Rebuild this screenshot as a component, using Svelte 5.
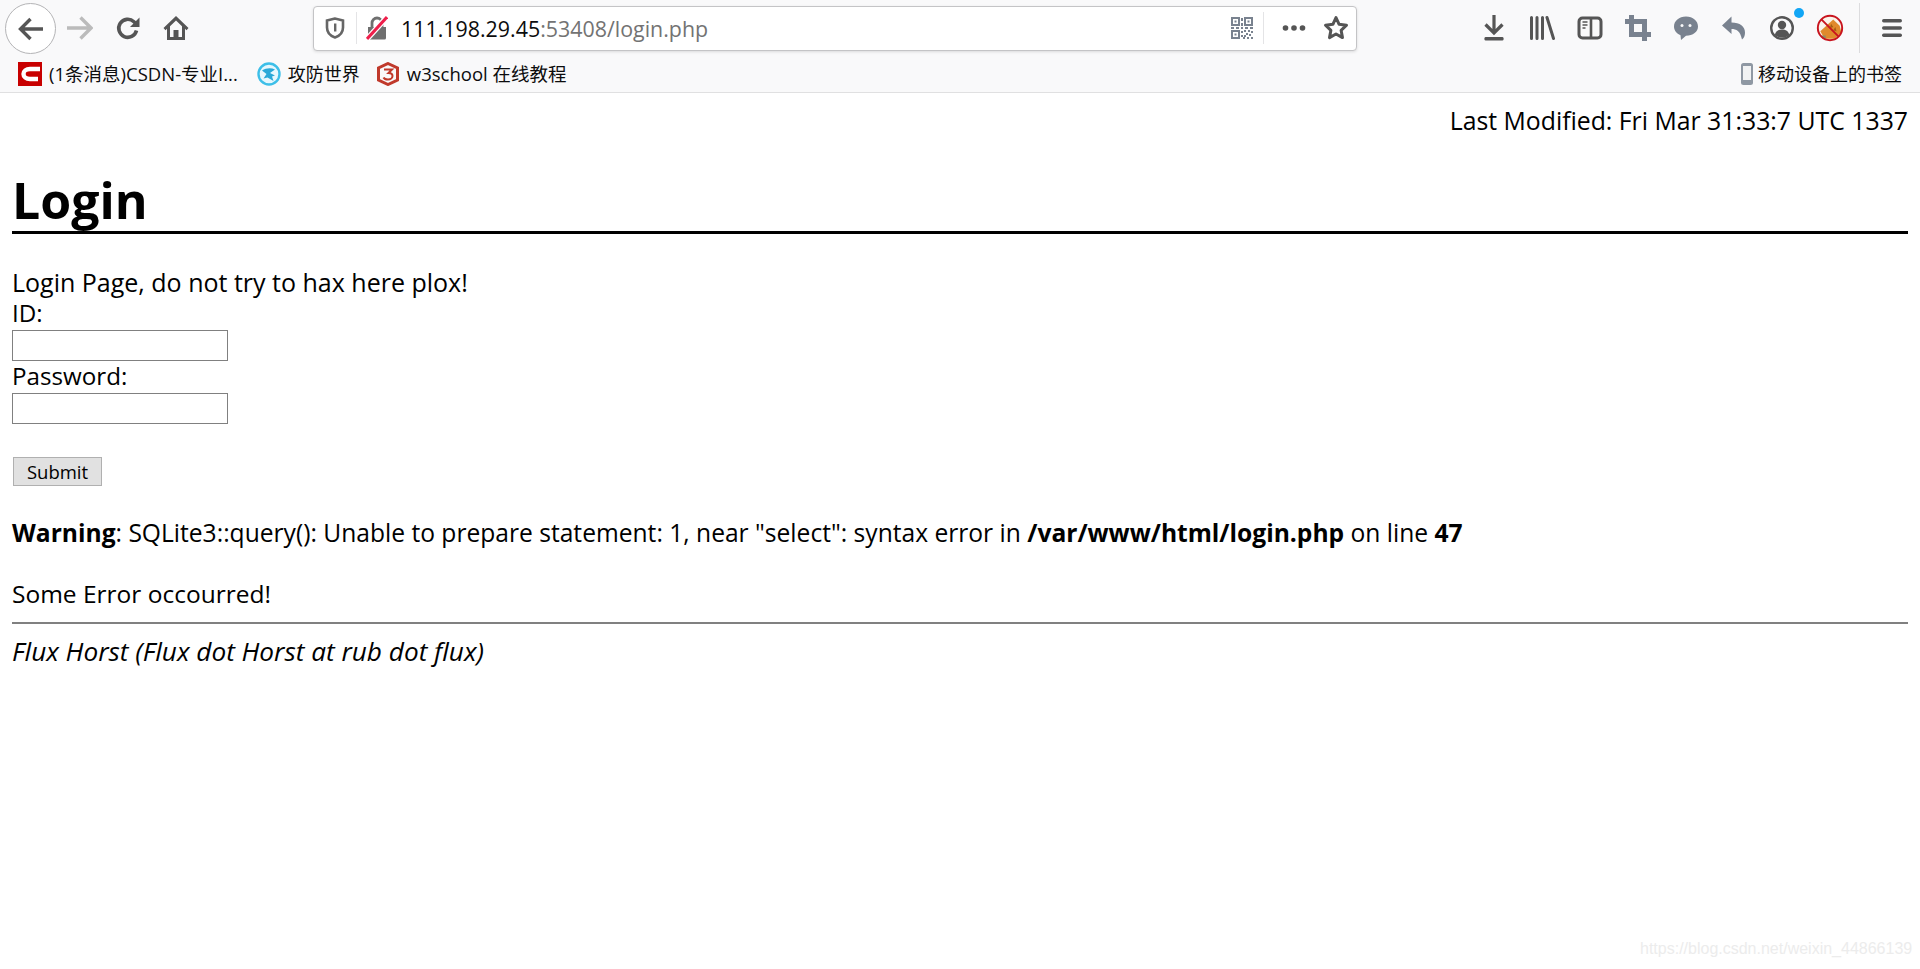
<script>
    const bookmarks = [
        { id: 'csdn', label: '(1条消息)CSDN-专业I...' },
        { id: 'adworld', label: '攻防世界' },
        { id: 'w3', label: 'w3school 在线教程' }
    ];
</script>

<div class="browser">
    <div class="toolbar">
        <button class="back" aria-label="Back">
            <svg width="28" height="28" viewBox="0 0 28 28"><path d="M26 14H4M13.500 4 3.500 14l10 10" fill="none" stroke="#555" stroke-width="3.400"/></svg>
        </button>
        <span class="tool">
            <svg width="26" height="26" viewBox="0 0 26 26"><path d="M0 13h23M13.500 2.500 24 13 13.500 23.500" fill="none" stroke="#bbb" stroke-width="3.400"/></svg>
        </span>
        <span class="tool">
            <svg width="26" height="26" viewBox="0 0 26 26"><path d="M21.500 15.500a9 9 0 1 1-2.600-8.800L22 9.500" fill="none" stroke="#555" stroke-width="3.600"/><path d="M24.500 2.500v9.500H15z" fill="#555"/></svg>
        </span>
        <span class="tool">
            <svg width="26" height="26" viewBox="0 0 26 26"><path d="M13 1 0.500 13l2 2.200 1.500-1.400V25h18V13.800l1.500 1.400 2-2.200z" fill="#555"/><path d="M13 5.500 7 11.200V22h3.500v-7h5v7H19V11.200z" fill="#f9f9fa"/><rect x="11.500" y="16" width="3" height="7" fill="#555"/></svg>
        </span>

        <div class="urlbar">
            <svg class="shield" width="20" height="22" viewBox="0 0 20 22"><path d="M10 1.500 2 3.500v7c0 5 3.500 8.500 8 10 4.500-1.500 8-5 8-10v-7z" fill="none" stroke="#666" stroke-width="2.600"/><path d="M9 6.500h2.400v8H9z" fill="#666"/></svg>
            <i class="sep"></i>
            <svg class="lock" width="22" height="24" viewBox="0 0 22 24"><path d="M2 11h18v11a1.500 1.500 0 0 1-1.500 1.500h-15A1.500 1.500 0 0 1 2 22z" fill="#6f6f6f"/><path d="M6 11V7a5 5 0 0 1 10 0v4" fill="none" stroke="#6f6f6f" stroke-width="2.800"/><path d="M1 23 21 1" stroke="#fff" stroke-width="5.500"/><path d="M1 23 21 1" stroke="#ee1f4b" stroke-width="3"/></svg>
            <span class="url">111.198.29.45<span class="dim">:53408/login.php</span></span>
            <svg class="qr" width="22" height="22" viewBox="0 0 22 22" fill="#79828f">
                <path d="M0 0h9v9H0zM2 2v5h5V2zM13 0h9v9h-9zM15 2v5h5V2zM0 13h9v9H0zM2 15v5h5v-5z" fill-rule="evenodd"/>
                <path d="M3.500 3.500h2v2h-2zM16.500 3.500h2v2h-2zM3.500 16.500h2v2h-2zM10 1h2v3h-2zM10 6h2v3h-2zM0 10h3v2H0zM5 10h3v2H5zM10 10h2v2h-2zM14 10h3v2h-3zM19 10h3v2h-3zM10 14h2v2h-2zM13 13h2v2h-2zM17 13h2v2h-2zM20 14h2v2h-2zM15 16h2v2h-2zM10 18h2v2h-2zM13 18h2v2h-2zM18 17h2v2h-2zM12 20h2v2h-2zM16 20h2v2h-2zM20 20h2v2h-2z"/>
            </svg>
            <i class="sep right"></i>
            <svg class="dots" width="24" height="6" viewBox="0 0 24 6" fill="#555"><circle cx="3.500" cy="3" r="2.800"/><circle cx="12" cy="3" r="2.800"/><circle cx="20.500" cy="3" r="2.800"/></svg>
            <svg class="star" width="26" height="26" viewBox="0 0 26 26"><path d="M13 2.500l3.100 6.800 7.400.9-5.400 5.100 1.400 7.300L13 19l-6.500 3.600 1.400-7.300-5.400-5.100 7.400-.9z" fill="none" stroke="#555" stroke-width="3" stroke-linejoin="round"/></svg>
        </div>

        <div class="tools-right">
            <span class="tool">
                <svg width="26" height="26" viewBox="0 0 26 26"><path d="M13 0v17M4.500 9.500 13 18l8.500-8.500" fill="none" stroke="#555" stroke-width="3.200"/><rect x="3.500" y="22" width="19" height="3.400" rx="1.200" fill="#555"/></svg>
            </span>
            <span class="tool">
                <svg width="26" height="26" viewBox="0 0 26 26" fill="none" stroke="#555" stroke-width="3" stroke-linecap="round"><path d="M2.500 2.500v21M8 2.500v21M13.500 2.500v21M18 2.500l6.500 21"/></svg>
            </span>
            <span class="tool">
                <svg width="26" height="26" viewBox="0 0 26 26"><rect x="2" y="3" width="22" height="20" rx="3.500" fill="none" stroke="#555" stroke-width="3"/><path d="M14 3v20" stroke="#555" stroke-width="2.600"/><path d="M5.500 7h5M5.500 10h5M5.500 13h3" stroke="#555" stroke-width="1.500"/></svg>
            </span>
            <span class="tool">
                <svg width="26" height="26" viewBox="0 0 26 26"><path d="M6.500 0v19.500H26M0 6.500h19.500V26" fill="none" stroke="#79828f" stroke-width="5"/></svg>
            </span>
            <span class="tool">
                <svg width="26" height="26" viewBox="0 0 26 26"><path d="M13 1.500C6 1.500 1 6 1 11.500c0 4 2.600 7.200 6.500 8.800L8 25l5-4.300c7 0 12-4 12-9.200C25 6 20 1.500 13 1.500z" fill="#79828f"/><circle cx="9" cy="10.500" r="1.500" fill="#f9f9fa"/><circle cx="17" cy="10.500" r="1.500" fill="#f9f9fa"/></svg>
            </span>
            <span class="tool">
                <svg width="26" height="26" viewBox="0 0 26 26"><path d="M10.500 1.500 1 10.500l9.500 8.500v-5c5 0 8.500 1.500 10.500 10.500 2.500-2 3-4.500 3-7 0-6-5-10-13.500-10z" fill="#79828f"/></svg>
            </span>
            <span class="tool avatar">
                <svg width="26" height="26" viewBox="0 0 26 26"><circle cx="13" cy="13" r="10.800" fill="none" stroke="#555" stroke-width="2.400"/><circle cx="13" cy="10" r="4.200" fill="#555"/><path d="M5.800 20c.6-4 3.600-5.500 7.200-5.500s6.600 1.500 7.200 5.500c-2 1.700-4.500 2.600-7.200 2.600S7.800 21.700 5.800 20z" fill="#555"/></svg>
                <i class="badge"></i>
            </span>
            <span class="tool">
                <svg width="28" height="28" viewBox="0 0 26 26"><circle cx="13" cy="13" r="11.300" fill="#fbf3ea"/><path d="M4 16 16 5l6 6 1.500 6-6 6H8z" fill="#e08a2c"/><path d="M4 20h5v3H6z" fill="#8a8f6a"/><path d="M14 9l2 3-3 1zM18 12l1 4-3-1z" fill="#a65e15"/><circle cx="13" cy="13" r="11.300" fill="none" stroke="#c8141e" stroke-width="1.800"/><path d="M5 5l16 16" stroke="#c8141e" stroke-width="1.800"/></svg>
            </span>
        </div>
        <i class="tool-sep"></i>
        <span class="tool">
            <svg width="26" height="26" viewBox="0 0 26 26" fill="#555"><rect x="3" y="4" width="20" height="3.400" rx="1.700"/><rect x="3" y="11.300" width="20" height="3.400" rx="1.700"/><rect x="3" y="18.600" width="20" height="3.400" rx="1.700"/></svg>
        </span>
    </div>

    <div class="bookmarks">
        {#each bookmarks as b}
            <span class="mark {b.id}">
                {#if b.id === 'csdn'}
                    <svg width="24" height="24" viewBox="0 0 24 24"><rect width="24" height="24" fill="#c80000"/><path d="M22 7h-10c-4 0-6.500 2-6.500 5s2.500 5 6.500 5h8" fill="none" stroke="#fff" stroke-width="4.400"/></svg>
                {:else if b.id === 'adworld'}
                    <svg width="24" height="24" viewBox="0 0 24 24"><circle cx="12" cy="12" r="10.500" fill="#e6f7fd" stroke="#3dbfe8" stroke-width="2.400"/><path d="M5 8.500c4-2.500 9-3 13-1l-5 3.500 5 2.500-3 1 1.500 4.500-6-3.500-4 1 3-4.500z" fill="#2aa9d8"/></svg>
                {:else}
                    <svg width="24" height="24" viewBox="0 0 24 24"><path d="M12 1.500 21.500 6v12L12 22.500 2.500 18V6z" fill="none" stroke="#c0392b" stroke-width="3"/><path d="M8 7.500h8l-3.500 3.500c2.500 0 4 1.200 4 3s-2 3.500-4.500 3.500-4-1-4.500-2" fill="none" stroke="#c0392b" stroke-width="2"/></svg>
                {/if}
                <span>{b.label}</span>
            </span>
        {/each}
        <span class="mobile">
            <svg width="14" height="24" viewBox="0 0 14 24"><rect x="1" y="1" width="12" height="22" rx="2.500" fill="#8f98a3"/><rect x="3" y="4" width="8" height="14" fill="#f1f2f3"/></svg>
            <span>移动设备上的书签</span>
        </span>
    </div>
</div>

<main class="page">
    <p class="modified">Last Modified: Fri Mar 31:33:7 UTC 1337</p>
    <h1>Login</h1>
    <div class="intro">Login Page, do not try to hax here plox!</div>
    <form onsubmit={(e) => e.preventDefault()}>
        <label for="uid">ID:</label>
        <input id="uid" type="text" />
        <label for="pwd">Password:</label>
        <input id="pwd" type="password" />
        <button class="submit" type="submit">Submit</button>
    </form>
    <p class="warning"><b>Warning</b>: SQLite3::query(): Unable to prepare statement: 1, near "select": syntax error in <b>/var/www/html/login.php</b> on line <b>47</b></p>
    <p class="error">Some Error occourred!</p>
    <hr />
    <em>Flux Horst (Flux dot Horst at rub dot flux)</em>
</main>

<span class="watermark">https://blog.csdn.net/weixin_44866139</span>

<style>
    :global(body) { background: #fff; color: #000; font-family: "Open Sans", "Noto Sans CJK SC", sans-serif; }

    .browser { background: #f9f9fa; border-bottom: 1px solid #e0e0e1; }
    .toolbar { display: flex; align-items: center; height: 56px; padding-left: 5px; position: relative; }
    .tool { width: 48px; height: 48px; flex: none; display: flex; align-items: center; justify-content: center; position: relative; }
    .back { width: 51px; height: 51px; flex: none; box-sizing: border-box; border: 1px solid #b4b4b6; border-radius: 50%; background: #fff; padding: 0; display: flex; align-items: center; justify-content: center; margin-top: 1px; }

    .urlbar { width: 1044px; height: 45px; box-sizing: border-box; margin-left: 113px; flex: none; display: flex; align-items: center; background: #fff; border: 1px solid #c4c4c6; border-radius: 4px; box-shadow: 0 1px 3px rgba(0, 0, 0, 0.12); }
    .shield { margin-left: 11px; flex: none; }
    .sep { width: 1px; height: 32px; background: #e4e4e6; margin-left: 11px; flex: none; }
    .lock { margin-left: 9px; flex: none; }
    .url { margin-left: 13px; font-size: 21.400px; color: #0c0c0d; white-space: nowrap; flex: 1; }
    .dim { color: #737373; }
    .qr { flex: none; }
    .sep.right { margin-left: 10px; }
    .dots { margin-left: 18px; flex: none; }
    .star { margin-left: 17px; margin-right: 7px; flex: none; }

    .tools-right { display: flex; margin-left: 113px; flex: none; }
    .badge { position: absolute; top: 4px; right: 2px; width: 10px; height: 10px; border-radius: 50%; background: #12a6f5; }
    .tool-sep { width: 1px; height: 50px; background: #dcdcde; margin-left: 5px; flex: none; }
    .tool-sep + .tool { margin-left: 8px; }

    .bookmarks { display: flex; align-items: center; height: 36px; padding-left: 18px; font-size: 18.500px; color: #0c0c0d; white-space: nowrap; }
    .mark { display: flex; align-items: center; gap: 7px; margin-right: 17px; }
    .mark.csdn { margin-right: 19px; }
    .mark.adworld { font-size: 18px; margin-right: 16px; }
    .mark span, .mobile span { position: relative; top: -1px; }
    .mobile { margin-left: auto; margin-right: 18px; display: flex; align-items: center; gap: 4px; font-size: 18px; }

    .page { padding: 0 12px; font-size: 24.800px; line-height: 32px; }
    .modified { margin: 11px 0 0; text-align: right; }
    h1 { margin: 34px 0 0; font-size: 50px; line-height: 61px; font-weight: 700; border-bottom: 3px solid #000; }
    .intro { margin-top: 32px; font-size: 25px; }
    form { display: block; }
    label { display: block; height: 32px; line-height: 30px; font-size: 24.200px; }
    input { display: block; width: 216px; height: 31px; box-sizing: border-box; margin: 0; padding: 0 2px; border: 1px solid #808080; background: #fff; }
    .submit { display: block; width: 89px; height: 29px; box-sizing: border-box; margin: 33px 0 0 1px; padding: 0; border: 1px solid #b0b0b0; background: #e1e1e1; font: 18.500px "Open Sans", sans-serif; color: #000; }
    .warning { margin: 31px 0 0; font-size: 24.600px; }
    .error { margin: 29px 0 0; font-size: 24.500px; }
    hr { height: 2px; margin: 12px 0 11px; border: 0; background: #808080; }
    em { font-style: italic; display: block; font-size: 26.200px; }
    .watermark { position: absolute; left: 1640px; top: 940px; font: 16px "Liberation Sans", sans-serif; color: #ececec; }
</style>
